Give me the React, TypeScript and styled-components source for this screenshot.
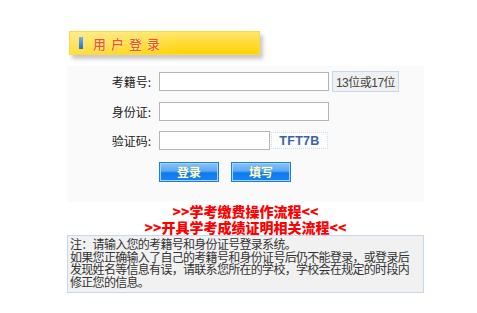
import React from "react";
import styled, { createGlobalStyle } from "styled-components";

const Global = createGlobalStyle`
  html, body { margin: 0; padding: 0; background: #fff; }
  body { font-family: "Liberation Sans", "Noto Sans CJK SC", sans-serif; font-size: 12px; color: #222; }
`;

const Page = styled.div`
  width: 357px;
  margin-left: 67px;
  padding-top: 31px;
`;

const Banner = styled.div`
  margin-left: 2px;
  width: 191px;
  height: 24px;
  box-sizing: border-box;
  display: flex;
  align-items: center;
  padding-left: 9px;
  gap: 10px;
  background: linear-gradient(to right, rgba(255,255,255,0.25), rgba(255,255,255,0) 60%),
    linear-gradient(to bottom, #ffe56a 0%, #ffdd3c 45%, #ffd400 100%);
  border: 1px solid #ffd84a;
  box-shadow: 3px 4px 4px rgba(0, 0, 0, 0.22);
`;

const BlueMark = styled.span`
  width: 4px;
  height: 12px;
  background: linear-gradient(to bottom, #6fb0f0, #1f6fd6);
`;

const BannerTitle = styled.span`
  font-family: "Noto Sans CJK SC", sans-serif;
  font-size: 13px;
  font-weight: 500;
  letter-spacing: 5px;
  color: #ff5500;
  text-shadow: 0 0 2px #fff, 0 0 1px #fff;
  line-height: 1;
`;

const Panel = styled.div`
  margin-top: 11px;
  background: #fafafa;
  padding: 5px 0 20px;
  display: flex;
  flex-direction: column;
  gap: 8.5px;
`;

const Row = styled.div`
  display: flex;
  align-items: center;
  height: 21px;
`;

const Label = styled.label`
  width: 84px;
  text-align: right;
  margin-right: 8px;
  font-family: "Noto Sans CJK SC", sans-serif;
  font-size: 12px;
  color: #222;
`;

const Input = styled.input<{ $w: number }>`
  width: ${(p) => p.$w}px;
  height: 19px;
  box-sizing: border-box;
  border: 1px solid #b4b4b4;
  background: #fff;
  margin: 0;
  padding: 0 3px;
  outline: none;
`;

const Hint = styled.span`
  margin-left: 3px;
  height: 21px;
  width: 67px;
  box-sizing: border-box;
  border: 1px solid #c6d8ef;
  background: #f0f0f0;
  display: flex;
  align-items: center;
  justify-content: center;
  font-family: "Liberation Sans", "Noto Sans CJK SC", sans-serif;
  font-size: 12px;
  letter-spacing: -0.5px;
  color: #444;
`;

const Captcha = styled.span`
  margin-left: 1px;
  width: 57px;
  height: 17px;
  box-sizing: border-box;
  border: 1px dotted #cfdcea;
  background: #fbfdff;
  display: flex;
  align-items: center;
  justify-content: center;
  font-family: "Liberation Sans", sans-serif;
  font-weight: bold;
  font-size: 12.5px;
  letter-spacing: 0.3px;
  color: #3d62a8;
`;

const Buttons = styled.div`
  display: flex;
  gap: 12px;
  margin-left: 92px;
  margin-top: 2.5px;
`;

const Btn = styled.button`
  width: 60px;
  height: 20px;
  box-sizing: border-box;
  margin: 0;
  padding: 0;
  border: 1px solid #1a7fe8;
  box-shadow: inset 0 0 0 1px #a9d2fb;
  background: linear-gradient(to bottom, #8cc4f7 0%, #5aa8f3 45%, #0d79f0 55%, #1b86f4 100%);
  font-family: "Noto Sans CJK SC", sans-serif;
  font-weight: bold;
  font-size: 12px;
  color: #ffffc4;
  text-shadow: 0 0 1px #3a7fd0;
  line-height: 18px;
`;

const Links = styled.div`
  text-align: center;
  font-family: "Noto Sans CJK SC", serif;
  font-weight: 900;
  font-size: 14px;
  line-height: 16px;
  padding-top: 1px;
`;

const LinkLine = styled.a`
  display: block;
  color: #ff0000;
  text-decoration: none;
`;

const Note = styled.div`
  border: 1px solid #c7d7ec;
  background: #f1f1f1;
  padding: 2px 2px 3px;
  font-family: "Noto Sans CJK SC", sans-serif;
  font-size: 12px;
  letter-spacing: -0.7px;
  line-height: 12.7px;
  color: #333;
  white-space: nowrap;
`;

export default function App() {
  return (
    <>
      <Global />
      <Page>
        <Banner>
          <BlueMark />
          <BannerTitle>用户登录</BannerTitle>
        </Banner>
        <Panel>
          <Row>
            <Label>考籍号:</Label>
            <Input $w={170} />
            <Hint>13位或17位</Hint>
          </Row>
          <Row>
            <Label>身份证:</Label>
            <Input $w={170} />
          </Row>
          <Row>
            <Label>验证码:</Label>
            <Input $w={111} />
            <Captcha>TFT7B</Captcha>
          </Row>
          <Buttons>
            <Btn>登录</Btn>
            <Btn>填写</Btn>
          </Buttons>
        </Panel>
        <Links>
          <LinkLine>&gt;&gt;学考缴费操作流程&lt;&lt;</LinkLine>
          <LinkLine>&gt;&gt;开具学考成绩证明相关流程&lt;&lt;</LinkLine>
        </Links>
        <Note>
          注：请输入您的考籍号和身份证号登录系统。
          <br />
          如果您正确输入了自己的考籍号和身份证号后仍不能登录，或登录后
          <br />
          发现姓名等信息有误，请联系您所在的学校，学校会在规定的时段内
          <br />
          修正您的信息。
        </Note>
      </Page>
    </>
  );
}
